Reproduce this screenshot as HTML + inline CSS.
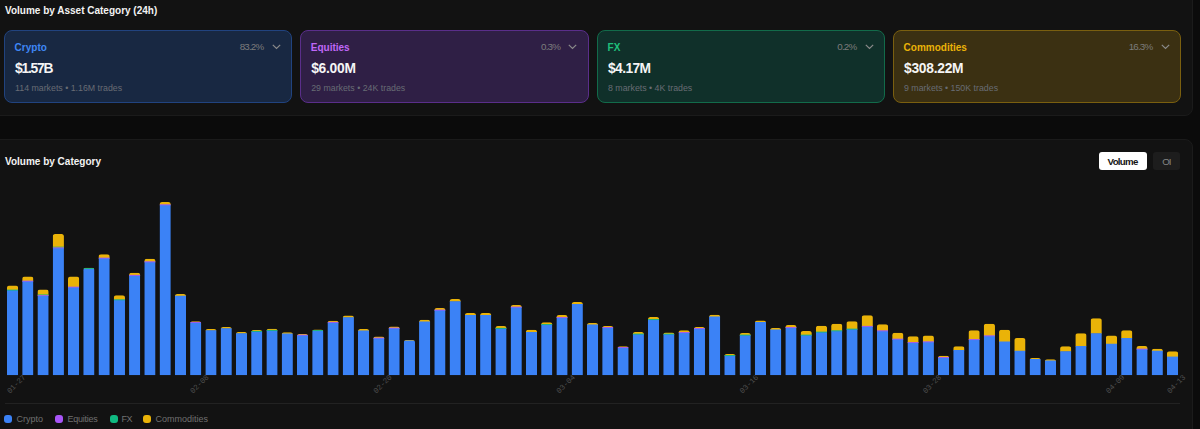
<!DOCTYPE html>
<html><head><meta charset="utf-8">
<style>
*{box-sizing:border-box;margin:0;padding:0}
html,body{width:1200px;height:429px;overflow:hidden;background:#0b0b0b;font-family:"Liberation Sans",sans-serif;position:relative}
.panel{position:absolute;background:#121212;border:1px solid #1b1b1b;border-radius:8px}
.t{position:absolute;white-space:nowrap;line-height:1}
.card{position:absolute;top:30px;height:73px;width:288px;border-radius:8px;border:1px solid}
.card .lab{position:absolute;left:9.6px;top:11.3px;font-size:10px;font-weight:bold;line-height:12px}
.card .val{position:absolute;left:10px;top:30.7px;font-size:13.8px;font-weight:bold;color:#f5f5f5;line-height:14px}
.card .sub{position:absolute;left:10px;top:52px;font-size:8.8px;color:#686c74;line-height:10px}
.card .pct{position:absolute;right:27.6px;top:11.1px;letter-spacing:-0.8px;font-size:9.8px;color:#7c7c7c;line-height:10px}
.card svg{position:absolute;right:10.4px;top:13.3px}
#c1{left:4px;background:#182842;border-color:#21437f}
#c1 .lab{color:#3f87f5}
#c2{left:300.2px;width:288.6px;background:#2f1f45;border-color:#5a2e8a}
#c2 .lab{color:#c067f7}
#c3{left:597px;background:#10302a;border-color:#126b4a}
#c3 .lab{color:#1fc07c}
#c4{left:893px;background:#3b3012;border-color:#7a5f0f}
#c4 .lab{color:#eab308}
</style></head><body>
<div class="panel" style="left:-10px;top:-10px;width:1203px;height:126px"></div>
<div class="panel" style="left:-10px;top:139px;width:1203px;height:300px"></div>
<div class="t" style="left:5px;top:6px;font-size:10px;font-weight:bold;color:#f2f2f2">Volume by Asset Category (24h)</div>

<div class="card" id="c1"><div class="lab">Crypto</div><div class="pct">83.2%</div><svg width="9" height="6" viewBox="0 0 9 6"><path d="M0.8 0.8 L4.5 4.5 L8.2 0.8" fill="none" stroke="#8a8a8a" stroke-width="1.2"/></svg><div class="val" style="letter-spacing:-1.2px">$1.57B</div><div class="sub">114 markets • 1.16M trades</div></div>
<div class="card" id="c2"><div class="lab">Equities</div><div class="pct">0.3%</div><svg width="9" height="6" viewBox="0 0 9 6"><path d="M0.8 0.8 L4.5 4.5 L8.2 0.8" fill="none" stroke="#8a8a8a" stroke-width="1.2"/></svg><div class="val" style="letter-spacing:-0.25px">$6.00M</div><div class="sub">29 markets • 24K trades</div></div>
<div class="card" id="c3"><div class="lab">FX</div><div class="pct">0.2%</div><svg width="9" height="6" viewBox="0 0 9 6"><path d="M0.8 0.8 L4.5 4.5 L8.2 0.8" fill="none" stroke="#8a8a8a" stroke-width="1.2"/></svg><div class="val" style="letter-spacing:-0.6px">$4.17M</div><div class="sub">8 markets • 4K trades</div></div>
<div class="card" id="c4"><div class="lab">Commodities</div><div class="pct">16.3%</div><svg width="9" height="6" viewBox="0 0 9 6"><path d="M0.8 0.8 L4.5 4.5 L8.2 0.8" fill="none" stroke="#8a8a8a" stroke-width="1.2"/></svg><div class="val" style="letter-spacing:-0.25px">$308.22M</div><div class="sub">9 markets • 150K trades</div></div>

<div class="t" style="left:5px;top:157px;font-size:10px;font-weight:bold;color:#f2f2f2">Volume by Category</div>
<div style="position:absolute;left:1099px;top:152px;width:48px;height:18px;background:#fff;border-radius:3px"></div>
<div class="t" style="left:1107.6px;top:156.6px;font-size:9.7px;letter-spacing:-0.7px;font-weight:bold;color:#151515">Volume</div>
<div style="position:absolute;left:1153px;top:152px;width:27px;height:18px;background:#1d1d1d;border-radius:3px"></div>
<div class="t" style="left:1162.2px;top:156.6px;font-size:9.7px;letter-spacing:-0.9px;color:#858585">OI</div>

<!--CHART--><svg style="position:absolute;left:0;top:0" width="1200" height="429" viewBox="0 0 1200 429">
<defs>
<clipPath id="k0"><path d="M6.95 375.2 V288.00 Q6.95 285.50 9.45 285.50 H15.65 Q18.15 285.50 18.15 288.00 V375.2 Z"/></clipPath>
<clipPath id="k1"><path d="M22.21 375.2 V279.00 Q22.21 276.50 24.71 276.50 H30.91 Q33.41 276.50 33.41 279.00 V375.2 Z"/></clipPath>
<clipPath id="k2"><path d="M37.48 375.2 V292.00 Q37.48 289.50 39.98 289.50 H46.18 Q48.68 289.50 48.68 292.00 V375.2 Z"/></clipPath>
<clipPath id="k3"><path d="M52.74 375.2 V236.50 Q52.74 234.00 55.24 234.00 H61.44 Q63.94 234.00 63.94 236.50 V375.2 Z"/></clipPath>
<clipPath id="k4"><path d="M68.00 375.2 V279.00 Q68.00 276.50 70.50 276.50 H76.70 Q79.20 276.50 79.20 279.00 V375.2 Z"/></clipPath>
<clipPath id="k5"><path d="M83.27 375.2 V270.25 Q83.27 267.75 85.77 267.75 H91.97 Q94.47 267.75 94.47 270.25 V375.2 Z"/></clipPath>
<clipPath id="k6"><path d="M98.53 375.2 V256.75 Q98.53 254.25 101.03 254.25 H107.23 Q109.73 254.25 109.73 256.75 V375.2 Z"/></clipPath>
<clipPath id="k7"><path d="M113.79 375.2 V297.75 Q113.79 295.25 116.29 295.25 H122.49 Q124.99 295.25 124.99 297.75 V375.2 Z"/></clipPath>
<clipPath id="k8"><path d="M129.05 375.2 V275.25 Q129.05 272.75 131.55 272.75 H137.75 Q140.25 272.75 140.25 275.25 V375.2 Z"/></clipPath>
<clipPath id="k9"><path d="M144.32 375.2 V261.25 Q144.32 258.75 146.82 258.75 H153.02 Q155.52 258.75 155.52 261.25 V375.2 Z"/></clipPath>
<clipPath id="k10"><path d="M159.58 375.2 V204.50 Q159.58 202.00 162.08 202.00 H168.28 Q170.78 202.00 170.78 204.50 V375.2 Z"/></clipPath>
<clipPath id="k11"><path d="M174.84 375.2 V296.50 Q174.84 294.00 177.34 294.00 H183.54 Q186.04 294.00 186.04 296.50 V375.2 Z"/></clipPath>
<clipPath id="k12"><path d="M190.11 375.2 V323.75 Q190.11 321.25 192.61 321.25 H198.81 Q201.31 321.25 201.31 323.75 V375.2 Z"/></clipPath>
<clipPath id="k13"><path d="M205.37 375.2 V331.50 Q205.37 329.00 207.87 329.00 H214.07 Q216.57 329.00 216.57 331.50 V375.2 Z"/></clipPath>
<clipPath id="k14"><path d="M220.63 375.2 V329.50 Q220.63 327.00 223.13 327.00 H229.33 Q231.83 327.00 231.83 329.50 V375.2 Z"/></clipPath>
<clipPath id="k15"><path d="M235.89 375.2 V334.50 Q235.89 332.00 238.39 332.00 H244.59 Q247.09 332.00 247.09 334.50 V375.2 Z"/></clipPath>
<clipPath id="k16"><path d="M251.16 375.2 V332.50 Q251.16 330.00 253.66 330.00 H259.86 Q262.36 330.00 262.36 332.50 V375.2 Z"/></clipPath>
<clipPath id="k17"><path d="M266.42 375.2 V331.25 Q266.42 328.75 268.92 328.75 H275.12 Q277.62 328.75 277.62 331.25 V375.2 Z"/></clipPath>
<clipPath id="k18"><path d="M281.68 375.2 V334.75 Q281.68 332.25 284.18 332.25 H290.38 Q292.88 332.25 292.88 334.75 V375.2 Z"/></clipPath>
<clipPath id="k19"><path d="M296.95 375.2 V336.50 Q296.95 334.00 299.45 334.00 H305.65 Q308.15 334.00 308.15 336.50 V375.2 Z"/></clipPath>
<clipPath id="k20"><path d="M312.21 375.2 V332.00 Q312.21 329.50 314.71 329.50 H320.91 Q323.41 329.50 323.41 332.00 V375.2 Z"/></clipPath>
<clipPath id="k21"><path d="M327.47 375.2 V323.25 Q327.47 320.75 329.97 320.75 H336.17 Q338.67 320.75 338.67 323.25 V375.2 Z"/></clipPath>
<clipPath id="k22"><path d="M342.74 375.2 V318.00 Q342.74 315.50 345.24 315.50 H351.44 Q353.94 315.50 353.94 318.00 V375.2 Z"/></clipPath>
<clipPath id="k23"><path d="M358.00 375.2 V331.50 Q358.00 329.00 360.50 329.00 H366.70 Q369.20 329.00 369.20 331.50 V375.2 Z"/></clipPath>
<clipPath id="k24"><path d="M373.26 375.2 V339.00 Q373.26 336.50 375.76 336.50 H381.96 Q384.46 336.50 384.46 339.00 V375.2 Z"/></clipPath>
<clipPath id="k25"><path d="M388.52 375.2 V329.00 Q388.52 326.50 391.02 326.50 H397.22 Q399.72 326.50 399.72 329.00 V375.2 Z"/></clipPath>
<clipPath id="k26"><path d="M403.79 375.2 V342.50 Q403.79 340.00 406.29 340.00 H412.49 Q414.99 340.00 414.99 342.50 V375.2 Z"/></clipPath>
<clipPath id="k27"><path d="M419.05 375.2 V322.25 Q419.05 319.75 421.55 319.75 H427.75 Q430.25 319.75 430.25 322.25 V375.2 Z"/></clipPath>
<clipPath id="k28"><path d="M434.31 375.2 V310.50 Q434.31 308.00 436.81 308.00 H443.01 Q445.51 308.00 445.51 310.50 V375.2 Z"/></clipPath>
<clipPath id="k29"><path d="M449.58 375.2 V301.50 Q449.58 299.00 452.08 299.00 H458.28 Q460.78 299.00 460.78 301.50 V375.2 Z"/></clipPath>
<clipPath id="k30"><path d="M464.84 375.2 V315.50 Q464.84 313.00 467.34 313.00 H473.54 Q476.04 313.00 476.04 315.50 V375.2 Z"/></clipPath>
<clipPath id="k31"><path d="M480.10 375.2 V315.50 Q480.10 313.00 482.60 313.00 H488.80 Q491.30 313.00 491.30 315.50 V375.2 Z"/></clipPath>
<clipPath id="k32"><path d="M495.37 375.2 V328.50 Q495.37 326.00 497.87 326.00 H504.07 Q506.57 326.00 506.57 328.50 V375.2 Z"/></clipPath>
<clipPath id="k33"><path d="M510.63 375.2 V307.50 Q510.63 305.00 513.13 305.00 H519.33 Q521.83 305.00 521.83 307.50 V375.2 Z"/></clipPath>
<clipPath id="k34"><path d="M525.89 375.2 V332.25 Q525.89 329.75 528.39 329.75 H534.59 Q537.09 329.75 537.09 332.25 V375.2 Z"/></clipPath>
<clipPath id="k35"><path d="M541.16 375.2 V324.75 Q541.16 322.25 543.66 322.25 H549.86 Q552.36 322.25 552.36 324.75 V375.2 Z"/></clipPath>
<clipPath id="k36"><path d="M556.42 375.2 V317.50 Q556.42 315.00 558.92 315.00 H565.12 Q567.62 315.00 567.62 317.50 V375.2 Z"/></clipPath>
<clipPath id="k37"><path d="M571.68 375.2 V304.50 Q571.68 302.00 574.18 302.00 H580.38 Q582.88 302.00 582.88 304.50 V375.2 Z"/></clipPath>
<clipPath id="k38"><path d="M586.94 375.2 V325.50 Q586.94 323.00 589.44 323.00 H595.64 Q598.14 323.00 598.14 325.50 V375.2 Z"/></clipPath>
<clipPath id="k39"><path d="M602.21 375.2 V328.50 Q602.21 326.00 604.71 326.00 H610.91 Q613.41 326.00 613.41 328.50 V375.2 Z"/></clipPath>
<clipPath id="k40"><path d="M617.47 375.2 V348.75 Q617.47 346.25 619.97 346.25 H626.17 Q628.67 346.25 628.67 348.75 V375.2 Z"/></clipPath>
<clipPath id="k41"><path d="M632.73 375.2 V334.50 Q632.73 332.00 635.23 332.00 H641.43 Q643.93 332.00 643.93 334.50 V375.2 Z"/></clipPath>
<clipPath id="k42"><path d="M648.00 375.2 V319.50 Q648.00 317.00 650.50 317.00 H656.70 Q659.20 317.00 659.20 319.50 V375.2 Z"/></clipPath>
<clipPath id="k43"><path d="M663.26 375.2 V335.00 Q663.26 332.50 665.76 332.50 H671.96 Q674.46 332.50 674.46 335.00 V375.2 Z"/></clipPath>
<clipPath id="k44"><path d="M678.52 375.2 V332.75 Q678.52 330.25 681.02 330.25 H687.22 Q689.72 330.25 689.72 332.75 V375.2 Z"/></clipPath>
<clipPath id="k45"><path d="M693.79 375.2 V329.50 Q693.79 327.00 696.29 327.00 H702.49 Q704.99 327.00 704.99 329.50 V375.2 Z"/></clipPath>
<clipPath id="k46"><path d="M709.05 375.2 V317.25 Q709.05 314.75 711.55 314.75 H717.75 Q720.25 314.75 720.25 317.25 V375.2 Z"/></clipPath>
<clipPath id="k47"><path d="M724.31 375.2 V356.50 Q724.31 354.00 726.81 354.00 H733.01 Q735.51 354.00 735.51 356.50 V375.2 Z"/></clipPath>
<clipPath id="k48"><path d="M739.57 375.2 V335.50 Q739.57 333.00 742.07 333.00 H748.27 Q750.77 333.00 750.77 335.50 V375.2 Z"/></clipPath>
<clipPath id="k49"><path d="M754.84 375.2 V323.00 Q754.84 320.50 757.34 320.50 H763.54 Q766.04 320.50 766.04 323.00 V375.2 Z"/></clipPath>
<clipPath id="k50"><path d="M770.10 375.2 V330.50 Q770.10 328.00 772.60 328.00 H778.80 Q781.30 328.00 781.30 330.50 V375.2 Z"/></clipPath>
<clipPath id="k51"><path d="M785.36 375.2 V327.50 Q785.36 325.00 787.86 325.00 H794.06 Q796.56 325.00 796.56 327.50 V375.2 Z"/></clipPath>
<clipPath id="k52"><path d="M800.63 375.2 V333.50 Q800.63 331.00 803.13 331.00 H809.33 Q811.83 331.00 811.83 333.50 V375.2 Z"/></clipPath>
<clipPath id="k53"><path d="M815.89 375.2 V328.25 Q815.89 325.75 818.39 325.75 H824.59 Q827.09 325.75 827.09 328.25 V375.2 Z"/></clipPath>
<clipPath id="k54"><path d="M831.15 375.2 V326.25 Q831.15 323.75 833.65 323.75 H839.85 Q842.35 323.75 842.35 326.25 V375.2 Z"/></clipPath>
<clipPath id="k55"><path d="M846.42 375.2 V323.75 Q846.42 321.25 848.92 321.25 H855.12 Q857.62 321.25 857.62 323.75 V375.2 Z"/></clipPath>
<clipPath id="k56"><path d="M861.68 375.2 V317.75 Q861.68 315.25 864.18 315.25 H870.38 Q872.88 315.25 872.88 317.75 V375.2 Z"/></clipPath>
<clipPath id="k57"><path d="M876.94 375.2 V326.75 Q876.94 324.25 879.44 324.25 H885.64 Q888.14 324.25 888.14 326.75 V375.2 Z"/></clipPath>
<clipPath id="k58"><path d="M892.20 375.2 V335.25 Q892.20 332.75 894.70 332.75 H900.90 Q903.40 332.75 903.40 335.25 V375.2 Z"/></clipPath>
<clipPath id="k59"><path d="M907.47 375.2 V338.75 Q907.47 336.25 909.97 336.25 H916.17 Q918.67 336.25 918.67 338.75 V375.2 Z"/></clipPath>
<clipPath id="k60"><path d="M922.73 375.2 V338.00 Q922.73 335.50 925.23 335.50 H931.43 Q933.93 335.50 933.93 338.00 V375.2 Z"/></clipPath>
<clipPath id="k61"><path d="M937.99 375.2 V358.25 Q937.99 355.75 940.49 355.75 H946.69 Q949.19 355.75 949.19 358.25 V375.2 Z"/></clipPath>
<clipPath id="k62"><path d="M953.26 375.2 V348.75 Q953.26 346.25 955.76 346.25 H961.96 Q964.46 346.25 964.46 348.75 V375.2 Z"/></clipPath>
<clipPath id="k63"><path d="M968.52 375.2 V332.75 Q968.52 330.25 971.02 330.25 H977.22 Q979.72 330.25 979.72 332.75 V375.2 Z"/></clipPath>
<clipPath id="k64"><path d="M983.78 375.2 V326.25 Q983.78 323.75 986.28 323.75 H992.48 Q994.98 323.75 994.98 326.25 V375.2 Z"/></clipPath>
<clipPath id="k65"><path d="M999.05 375.2 V332.25 Q999.05 329.75 1001.55 329.75 H1007.75 Q1010.25 329.75 1010.25 332.25 V375.2 Z"/></clipPath>
<clipPath id="k66"><path d="M1014.31 375.2 V340.50 Q1014.31 338.00 1016.81 338.00 H1023.01 Q1025.51 338.00 1025.51 340.50 V375.2 Z"/></clipPath>
<clipPath id="k67"><path d="M1029.57 375.2 V360.50 Q1029.57 358.00 1032.07 358.00 H1038.27 Q1040.77 358.00 1040.77 360.50 V375.2 Z"/></clipPath>
<clipPath id="k68"><path d="M1044.83 375.2 V361.75 Q1044.83 359.25 1047.33 359.25 H1053.53 Q1056.03 359.25 1056.03 361.75 V375.2 Z"/></clipPath>
<clipPath id="k69"><path d="M1060.10 375.2 V348.75 Q1060.10 346.25 1062.60 346.25 H1068.80 Q1071.30 346.25 1071.30 348.75 V375.2 Z"/></clipPath>
<clipPath id="k70"><path d="M1075.36 375.2 V335.75 Q1075.36 333.25 1077.86 333.25 H1084.06 Q1086.56 333.25 1086.56 335.75 V375.2 Z"/></clipPath>
<clipPath id="k71"><path d="M1090.62 375.2 V320.75 Q1090.62 318.25 1093.12 318.25 H1099.32 Q1101.82 318.25 1101.82 320.75 V375.2 Z"/></clipPath>
<clipPath id="k72"><path d="M1105.89 375.2 V338.00 Q1105.89 335.50 1108.39 335.50 H1114.59 Q1117.09 335.50 1117.09 338.00 V375.2 Z"/></clipPath>
<clipPath id="k73"><path d="M1121.15 375.2 V332.75 Q1121.15 330.25 1123.65 330.25 H1129.85 Q1132.35 330.25 1132.35 332.75 V375.2 Z"/></clipPath>
<clipPath id="k74"><path d="M1136.41 375.2 V348.50 Q1136.41 346.00 1138.91 346.00 H1145.11 Q1147.61 346.00 1147.61 348.50 V375.2 Z"/></clipPath>
<clipPath id="k75"><path d="M1151.67 375.2 V351.25 Q1151.67 348.75 1154.17 348.75 H1160.38 Q1162.88 348.75 1162.88 351.25 V375.2 Z"/></clipPath>
<clipPath id="k76"><path d="M1166.94 375.2 V353.80 Q1166.94 351.30 1169.44 351.30 H1175.64 Q1178.14 351.30 1178.14 353.80 V375.2 Z"/></clipPath>
</defs>
<g clip-path="url(#k0)"><rect x="6.95" y="285.50" width="11.2" height="5.00" fill="#eab308"/><rect x="6.95" y="290.00" width="11.2" height="85.20" fill="#3b82f6"/></g>
<g clip-path="url(#k1)"><rect x="22.21" y="276.50" width="11.2" height="5.00" fill="#eab308"/><rect x="22.21" y="281.00" width="11.2" height="94.20" fill="#3b82f6"/></g>
<g clip-path="url(#k2)"><rect x="37.48" y="289.50" width="11.2" height="6.50" fill="#eab308"/><rect x="37.48" y="295.50" width="11.2" height="79.70" fill="#3b82f6"/></g>
<g clip-path="url(#k3)"><rect x="52.74" y="234.00" width="11.2" height="14.25" fill="#eab308"/><rect x="52.74" y="247.75" width="11.2" height="127.45" fill="#3b82f6"/></g>
<g clip-path="url(#k4)"><rect x="68.00" y="276.50" width="11.2" height="11.00" fill="#eab308"/><rect x="68.00" y="287.00" width="11.2" height="88.20" fill="#3b82f6"/></g>
<g clip-path="url(#k5)"><rect x="83.27" y="267.75" width="11.2" height="1.25" fill="#eab308"/><rect x="83.27" y="268.50" width="11.2" height="106.70" fill="#3b82f6"/></g>
<g clip-path="url(#k6)"><rect x="98.53" y="254.25" width="11.2" height="4.25" fill="#eab308"/><rect x="98.53" y="258.00" width="11.2" height="117.20" fill="#3b82f6"/></g>
<g clip-path="url(#k7)"><rect x="113.79" y="295.25" width="11.2" height="5.00" fill="#eab308"/><rect x="113.79" y="299.75" width="11.2" height="75.45" fill="#3b82f6"/></g>
<g clip-path="url(#k8)"><rect x="129.05" y="272.75" width="11.2" height="3.00" fill="#eab308"/><rect x="129.05" y="275.25" width="11.2" height="99.95" fill="#3b82f6"/></g>
<g clip-path="url(#k9)"><rect x="144.32" y="258.75" width="11.2" height="3.50" fill="#eab308"/><rect x="144.32" y="261.75" width="11.2" height="113.45" fill="#3b82f6"/></g>
<g clip-path="url(#k10)"><rect x="159.58" y="202.00" width="11.2" height="3.25" fill="#eab308"/><rect x="159.58" y="204.75" width="11.2" height="170.45" fill="#3b82f6"/></g>
<g clip-path="url(#k11)"><rect x="174.84" y="294.00" width="11.2" height="2.25" fill="#eab308"/><rect x="174.84" y="295.75" width="11.2" height="79.45" fill="#3b82f6"/></g>
<g clip-path="url(#k12)"><rect x="190.11" y="321.25" width="11.2" height="1.50" fill="#eab308"/><rect x="190.11" y="322.25" width="11.2" height="52.95" fill="#3b82f6"/></g>
<g clip-path="url(#k13)"><rect x="205.37" y="329.00" width="11.2" height="1.75" fill="#eab308"/><rect x="205.37" y="330.25" width="11.2" height="44.95" fill="#3b82f6"/></g>
<g clip-path="url(#k14)"><rect x="220.63" y="327.00" width="11.2" height="1.75" fill="#eab308"/><rect x="220.63" y="328.25" width="11.2" height="46.95" fill="#3b82f6"/></g>
<g clip-path="url(#k15)"><rect x="235.89" y="332.00" width="11.2" height="1.75" fill="#eab308"/><rect x="235.89" y="333.25" width="11.2" height="41.95" fill="#3b82f6"/></g>
<g clip-path="url(#k16)"><rect x="251.16" y="330.00" width="11.2" height="1.75" fill="#eab308"/><rect x="251.16" y="331.25" width="11.2" height="43.95" fill="#3b82f6"/></g>
<g clip-path="url(#k17)"><rect x="266.42" y="328.75" width="11.2" height="2.00" fill="#eab308"/><rect x="266.42" y="330.25" width="11.2" height="44.95" fill="#3b82f6"/></g>
<g clip-path="url(#k18)"><rect x="281.68" y="332.25" width="11.2" height="1.75" fill="#eab308"/><rect x="281.68" y="333.50" width="11.2" height="41.70" fill="#3b82f6"/></g>
<g clip-path="url(#k19)"><rect x="296.95" y="334.00" width="11.2" height="1.50" fill="#eab308"/><rect x="296.95" y="335.00" width="11.2" height="40.20" fill="#3b82f6"/></g>
<g clip-path="url(#k20)"><rect x="312.21" y="329.50" width="11.2" height="1.50" fill="#eab308"/><rect x="312.21" y="330.50" width="11.2" height="44.70" fill="#3b82f6"/></g>
<g clip-path="url(#k21)"><rect x="327.47" y="320.75" width="11.2" height="2.00" fill="#eab308"/><rect x="327.47" y="322.25" width="11.2" height="52.95" fill="#3b82f6"/></g>
<g clip-path="url(#k22)"><rect x="342.74" y="315.50" width="11.2" height="2.25" fill="#eab308"/><rect x="342.74" y="317.25" width="11.2" height="57.95" fill="#3b82f6"/></g>
<g clip-path="url(#k23)"><rect x="358.00" y="329.00" width="11.2" height="2.00" fill="#eab308"/><rect x="358.00" y="330.50" width="11.2" height="44.70" fill="#3b82f6"/></g>
<g clip-path="url(#k24)"><rect x="373.26" y="336.50" width="11.2" height="2.00" fill="#eab308"/><rect x="373.26" y="338.00" width="11.2" height="37.20" fill="#3b82f6"/></g>
<g clip-path="url(#k25)"><rect x="388.52" y="326.50" width="11.2" height="2.00" fill="#eab308"/><rect x="388.52" y="328.00" width="11.2" height="47.20" fill="#3b82f6"/></g>
<g clip-path="url(#k26)"><rect x="403.79" y="340.00" width="11.2" height="1.00" fill="#eab308"/><rect x="403.79" y="340.50" width="11.2" height="34.70" fill="#3b82f6"/></g>
<g clip-path="url(#k27)"><rect x="419.05" y="319.75" width="11.2" height="2.25" fill="#eab308"/><rect x="419.05" y="321.50" width="11.2" height="53.70" fill="#3b82f6"/></g>
<g clip-path="url(#k28)"><rect x="434.31" y="308.00" width="11.2" height="2.50" fill="#eab308"/><rect x="434.31" y="310.00" width="11.2" height="65.20" fill="#3b82f6"/></g>
<g clip-path="url(#k29)"><rect x="449.58" y="299.00" width="11.2" height="2.75" fill="#eab308"/><rect x="449.58" y="301.25" width="11.2" height="73.95" fill="#3b82f6"/></g>
<g clip-path="url(#k30)"><rect x="464.84" y="313.00" width="11.2" height="2.50" fill="#eab308"/><rect x="464.84" y="315.00" width="11.2" height="60.20" fill="#3b82f6"/></g>
<g clip-path="url(#k31)"><rect x="480.10" y="313.00" width="11.2" height="2.50" fill="#eab308"/><rect x="480.10" y="315.00" width="11.2" height="60.20" fill="#3b82f6"/></g>
<g clip-path="url(#k32)"><rect x="495.37" y="326.00" width="11.2" height="2.75" fill="#eab308"/><rect x="495.37" y="328.25" width="11.2" height="46.95" fill="#3b82f6"/></g>
<g clip-path="url(#k33)"><rect x="510.63" y="305.00" width="11.2" height="2.50" fill="#eab308"/><rect x="510.63" y="307.00" width="11.2" height="68.20" fill="#3b82f6"/></g>
<g clip-path="url(#k34)"><rect x="525.89" y="329.75" width="11.2" height="2.75" fill="#eab308"/><rect x="525.89" y="332.00" width="11.2" height="43.20" fill="#3b82f6"/></g>
<g clip-path="url(#k35)"><rect x="541.16" y="322.25" width="11.2" height="2.75" fill="#eab308"/><rect x="541.16" y="324.50" width="11.2" height="50.70" fill="#3b82f6"/></g>
<g clip-path="url(#k36)"><rect x="556.42" y="315.00" width="11.2" height="3.00" fill="#eab308"/><rect x="556.42" y="317.50" width="11.2" height="57.70" fill="#3b82f6"/></g>
<g clip-path="url(#k37)"><rect x="571.68" y="302.00" width="11.2" height="2.50" fill="#eab308"/><rect x="571.68" y="304.00" width="11.2" height="71.20" fill="#3b82f6"/></g>
<g clip-path="url(#k38)"><rect x="586.94" y="323.00" width="11.2" height="2.00" fill="#eab308"/><rect x="586.94" y="324.50" width="11.2" height="50.70" fill="#3b82f6"/></g>
<g clip-path="url(#k39)"><rect x="602.21" y="326.00" width="11.2" height="2.00" fill="#eab308"/><rect x="602.21" y="327.50" width="11.2" height="47.70" fill="#3b82f6"/></g>
<g clip-path="url(#k40)"><rect x="617.47" y="346.25" width="11.2" height="1.75" fill="#eab308"/><rect x="617.47" y="347.50" width="11.2" height="27.70" fill="#3b82f6"/></g>
<g clip-path="url(#k41)"><rect x="632.73" y="332.00" width="11.2" height="2.50" fill="#eab308"/><rect x="632.73" y="334.00" width="11.2" height="41.20" fill="#3b82f6"/></g>
<g clip-path="url(#k42)"><rect x="648.00" y="317.00" width="11.2" height="3.00" fill="#eab308"/><rect x="648.00" y="319.50" width="11.2" height="55.70" fill="#3b82f6"/></g>
<g clip-path="url(#k43)"><rect x="663.26" y="332.50" width="11.2" height="2.00" fill="#eab308"/><rect x="663.26" y="334.00" width="11.2" height="41.20" fill="#3b82f6"/></g>
<g clip-path="url(#k44)"><rect x="678.52" y="330.25" width="11.2" height="2.75" fill="#eab308"/><rect x="678.52" y="332.50" width="11.2" height="42.70" fill="#3b82f6"/></g>
<g clip-path="url(#k45)"><rect x="693.79" y="327.00" width="11.2" height="2.00" fill="#eab308"/><rect x="693.79" y="328.50" width="11.2" height="46.70" fill="#3b82f6"/></g>
<g clip-path="url(#k46)"><rect x="709.05" y="314.75" width="11.2" height="2.25" fill="#eab308"/><rect x="709.05" y="316.50" width="11.2" height="58.70" fill="#3b82f6"/></g>
<g clip-path="url(#k47)"><rect x="724.31" y="354.00" width="11.2" height="2.00" fill="#eab308"/><rect x="724.31" y="355.50" width="11.2" height="19.70" fill="#3b82f6"/></g>
<g clip-path="url(#k48)"><rect x="739.57" y="333.00" width="11.2" height="2.50" fill="#eab308"/><rect x="739.57" y="335.00" width="11.2" height="40.20" fill="#3b82f6"/></g>
<g clip-path="url(#k49)"><rect x="754.84" y="320.50" width="11.2" height="2.00" fill="#eab308"/><rect x="754.84" y="322.00" width="11.2" height="53.20" fill="#3b82f6"/></g>
<g clip-path="url(#k50)"><rect x="770.10" y="328.00" width="11.2" height="2.00" fill="#eab308"/><rect x="770.10" y="329.50" width="11.2" height="45.70" fill="#3b82f6"/></g>
<g clip-path="url(#k51)"><rect x="785.36" y="325.00" width="11.2" height="3.00" fill="#eab308"/><rect x="785.36" y="327.50" width="11.2" height="47.70" fill="#3b82f6"/></g>
<g clip-path="url(#k52)"><rect x="800.63" y="331.00" width="11.2" height="4.50" fill="#eab308"/><rect x="800.63" y="335.00" width="11.2" height="40.20" fill="#3b82f6"/></g>
<g clip-path="url(#k53)"><rect x="815.89" y="325.75" width="11.2" height="6.75" fill="#eab308"/><rect x="815.89" y="332.00" width="11.2" height="43.20" fill="#3b82f6"/></g>
<g clip-path="url(#k54)"><rect x="831.15" y="323.75" width="11.2" height="7.50" fill="#eab308"/><rect x="831.15" y="330.75" width="11.2" height="44.45" fill="#3b82f6"/></g>
<g clip-path="url(#k55)"><rect x="846.42" y="321.25" width="11.2" height="8.25" fill="#eab308"/><rect x="846.42" y="329.00" width="11.2" height="46.20" fill="#3b82f6"/></g>
<g clip-path="url(#k56)"><rect x="861.68" y="315.25" width="11.2" height="11.50" fill="#eab308"/><rect x="861.68" y="326.25" width="11.2" height="48.95" fill="#3b82f6"/></g>
<g clip-path="url(#k57)"><rect x="876.94" y="324.25" width="11.2" height="7.00" fill="#eab308"/><rect x="876.94" y="330.75" width="11.2" height="44.45" fill="#3b82f6"/></g>
<g clip-path="url(#k58)"><rect x="892.20" y="332.75" width="11.2" height="6.75" fill="#eab308"/><rect x="892.20" y="339.00" width="11.2" height="36.20" fill="#3b82f6"/></g>
<g clip-path="url(#k59)"><rect x="907.47" y="336.25" width="11.2" height="6.75" fill="#eab308"/><rect x="907.47" y="342.50" width="11.2" height="32.70" fill="#3b82f6"/></g>
<g clip-path="url(#k60)"><rect x="922.73" y="335.50" width="11.2" height="6.75" fill="#eab308"/><rect x="922.73" y="341.75" width="11.2" height="33.45" fill="#3b82f6"/></g>
<g clip-path="url(#k61)"><rect x="937.99" y="355.75" width="11.2" height="2.25" fill="#eab308"/><rect x="937.99" y="357.50" width="11.2" height="17.70" fill="#3b82f6"/></g>
<g clip-path="url(#k62)"><rect x="953.26" y="346.25" width="11.2" height="4.25" fill="#eab308"/><rect x="953.26" y="350.00" width="11.2" height="25.20" fill="#3b82f6"/></g>
<g clip-path="url(#k63)"><rect x="968.52" y="330.25" width="11.2" height="9.75" fill="#eab308"/><rect x="968.52" y="339.50" width="11.2" height="35.70" fill="#3b82f6"/></g>
<g clip-path="url(#k64)"><rect x="983.78" y="323.75" width="11.2" height="12.50" fill="#eab308"/><rect x="983.78" y="335.75" width="11.2" height="39.45" fill="#3b82f6"/></g>
<g clip-path="url(#k65)"><rect x="999.05" y="329.75" width="11.2" height="12.25" fill="#eab308"/><rect x="999.05" y="341.50" width="11.2" height="33.70" fill="#3b82f6"/></g>
<g clip-path="url(#k66)"><rect x="1014.31" y="338.00" width="11.2" height="13.25" fill="#eab308"/><rect x="1014.31" y="350.75" width="11.2" height="24.45" fill="#3b82f6"/></g>
<g clip-path="url(#k67)"><rect x="1029.57" y="358.00" width="11.2" height="1.50" fill="#eab308"/><rect x="1029.57" y="359.00" width="11.2" height="16.20" fill="#3b82f6"/></g>
<g clip-path="url(#k68)"><rect x="1044.83" y="359.25" width="11.2" height="1.75" fill="#eab308"/><rect x="1044.83" y="360.50" width="11.2" height="14.70" fill="#3b82f6"/></g>
<g clip-path="url(#k69)"><rect x="1060.10" y="346.25" width="11.2" height="5.50" fill="#eab308"/><rect x="1060.10" y="351.25" width="11.2" height="23.95" fill="#3b82f6"/></g>
<g clip-path="url(#k70)"><rect x="1075.36" y="333.25" width="11.2" height="13.25" fill="#eab308"/><rect x="1075.36" y="346.00" width="11.2" height="29.20" fill="#3b82f6"/></g>
<g clip-path="url(#k71)"><rect x="1090.62" y="318.25" width="11.2" height="15.50" fill="#eab308"/><rect x="1090.62" y="333.25" width="11.2" height="41.95" fill="#3b82f6"/></g>
<g clip-path="url(#k72)"><rect x="1105.89" y="335.50" width="11.2" height="8.75" fill="#eab308"/><rect x="1105.89" y="343.75" width="11.2" height="31.45" fill="#3b82f6"/></g>
<g clip-path="url(#k73)"><rect x="1121.15" y="330.25" width="11.2" height="8.25" fill="#eab308"/><rect x="1121.15" y="338.00" width="11.2" height="37.20" fill="#3b82f6"/></g>
<g clip-path="url(#k74)"><rect x="1136.41" y="346.00" width="11.2" height="3.50" fill="#eab308"/><rect x="1136.41" y="349.00" width="11.2" height="26.20" fill="#3b82f6"/></g>
<g clip-path="url(#k75)"><rect x="1151.67" y="348.75" width="11.2" height="2.50" fill="#eab308"/><rect x="1151.67" y="350.75" width="11.2" height="24.45" fill="#3b82f6"/></g>
<g clip-path="url(#k76)"><rect x="1166.94" y="351.30" width="11.2" height="5.80" fill="#eab308"/><rect x="1166.94" y="356.60" width="11.2" height="18.60" fill="#3b82f6"/></g>
<rect clip-path="url(#k0)" x="6.95" y="289.65" width="11.2" height="0.9" fill="#10b981"/>
<rect clip-path="url(#k1)" x="22.21" y="280.65" width="11.2" height="0.9" fill="#a855f7"/>
<rect clip-path="url(#k2)" x="37.48" y="294.45" width="11.2" height="0.8" fill="#10b981"/><rect clip-path="url(#k2)" x="37.48" y="295.25" width="11.2" height="0.8" fill="#a855f7"/>
<rect clip-path="url(#k3)" x="52.74" y="246.70" width="11.2" height="0.8" fill="#10b981"/><rect clip-path="url(#k3)" x="52.74" y="247.50" width="11.2" height="0.8" fill="#a855f7"/>
<rect clip-path="url(#k4)" x="68.00" y="286.65" width="11.2" height="0.9" fill="#a855f7"/>
<rect clip-path="url(#k5)" x="83.27" y="268.15" width="11.2" height="0.9" fill="#10b981"/>
<rect clip-path="url(#k6)" x="98.53" y="257.65" width="11.2" height="0.9" fill="#a855f7"/>
<rect clip-path="url(#k7)" x="113.79" y="299.40" width="11.2" height="0.9" fill="#10b981"/>
<rect clip-path="url(#k8)" x="129.05" y="274.90" width="11.2" height="0.9" fill="#a855f7"/>
<rect clip-path="url(#k9)" x="144.32" y="261.40" width="11.2" height="0.9" fill="#a855f7"/>
<rect clip-path="url(#k10)" x="159.58" y="204.40" width="11.2" height="0.9" fill="#a855f7"/>
<rect clip-path="url(#k12)" x="190.11" y="321.90" width="11.2" height="0.9" fill="#a855f7"/>
<rect clip-path="url(#k16)" x="251.16" y="330.90" width="11.2" height="0.9" fill="#10b981"/>
<rect clip-path="url(#k17)" x="266.42" y="329.90" width="11.2" height="0.9" fill="#10b981"/>
<rect clip-path="url(#k19)" x="296.95" y="334.65" width="11.2" height="0.9" fill="#a855f7"/>
<rect clip-path="url(#k20)" x="312.21" y="330.15" width="11.2" height="0.9" fill="#10b981"/>
<rect clip-path="url(#k21)" x="327.47" y="321.90" width="11.2" height="0.9" fill="#a855f7"/>
<rect clip-path="url(#k24)" x="373.26" y="337.65" width="11.2" height="0.9" fill="#a855f7"/>
<rect clip-path="url(#k25)" x="388.52" y="327.65" width="11.2" height="0.9" fill="#a855f7"/>
<rect clip-path="url(#k28)" x="434.31" y="309.65" width="11.2" height="0.9" fill="#a855f7"/>
<rect clip-path="url(#k32)" x="495.37" y="327.90" width="11.2" height="0.9" fill="#10b981"/>
<rect clip-path="url(#k33)" x="510.63" y="306.65" width="11.2" height="0.9" fill="#a855f7"/>
<rect clip-path="url(#k35)" x="541.16" y="324.15" width="11.2" height="0.9" fill="#10b981"/>
<rect clip-path="url(#k36)" x="556.42" y="317.15" width="11.2" height="0.9" fill="#a855f7"/>
<rect clip-path="url(#k39)" x="602.21" y="327.15" width="11.2" height="0.9" fill="#a855f7"/>
<rect clip-path="url(#k40)" x="617.47" y="347.15" width="11.2" height="0.9" fill="#a855f7"/>
<rect clip-path="url(#k41)" x="632.73" y="333.65" width="11.2" height="0.9" fill="#10b981"/>
<rect clip-path="url(#k42)" x="648.00" y="319.15" width="11.2" height="0.9" fill="#10b981"/>
<rect clip-path="url(#k43)" x="663.26" y="333.65" width="11.2" height="0.9" fill="#10b981"/>
<rect clip-path="url(#k44)" x="678.52" y="332.15" width="11.2" height="0.9" fill="#a855f7"/>
<rect clip-path="url(#k45)" x="693.79" y="328.15" width="11.2" height="0.9" fill="#a855f7"/>
<rect clip-path="url(#k47)" x="724.31" y="355.15" width="11.2" height="0.9" fill="#10b981"/>
<rect clip-path="url(#k48)" x="739.57" y="334.65" width="11.2" height="0.9" fill="#10b981"/>
<rect clip-path="url(#k51)" x="785.36" y="327.15" width="11.2" height="0.9" fill="#a855f7"/>
<rect clip-path="url(#k52)" x="800.63" y="334.65" width="11.2" height="0.9" fill="#10b981"/>
<rect clip-path="url(#k53)" x="815.89" y="331.65" width="11.2" height="0.9" fill="#10b981"/>
<rect clip-path="url(#k54)" x="831.15" y="330.40" width="11.2" height="0.9" fill="#10b981"/>
<rect clip-path="url(#k55)" x="846.42" y="328.65" width="11.2" height="0.9" fill="#10b981"/>
<rect clip-path="url(#k56)" x="861.68" y="325.90" width="11.2" height="0.9" fill="#a855f7"/>
<rect clip-path="url(#k57)" x="876.94" y="330.40" width="11.2" height="0.9" fill="#a855f7"/>
<rect clip-path="url(#k58)" x="892.20" y="338.65" width="11.2" height="0.9" fill="#a855f7"/>
<rect clip-path="url(#k59)" x="907.47" y="342.15" width="11.2" height="0.9" fill="#a855f7"/>
<rect clip-path="url(#k60)" x="922.73" y="341.40" width="11.2" height="0.9" fill="#a855f7"/>
<rect clip-path="url(#k61)" x="937.99" y="357.15" width="11.2" height="0.9" fill="#a855f7"/>
<rect clip-path="url(#k63)" x="968.52" y="339.15" width="11.2" height="0.9" fill="#a855f7"/>
<rect clip-path="url(#k64)" x="983.78" y="335.40" width="11.2" height="0.9" fill="#a855f7"/>
<rect clip-path="url(#k74)" x="1136.41" y="348.65" width="11.2" height="0.9" fill="#a855f7"/>
<text x="16.55" y="384.3" transform="rotate(-45 16.55 384.3)" text-anchor="middle" dominant-baseline="central" font-family="Liberation Mono" font-size="7.6" fill="#4e4e4e">01-27</text>
<text x="199.71" y="384.3" transform="rotate(-45 199.71 384.3)" text-anchor="middle" dominant-baseline="central" font-family="Liberation Mono" font-size="7.6" fill="#4e4e4e">02-08</text>
<text x="382.86" y="384.3" transform="rotate(-45 382.86 384.3)" text-anchor="middle" dominant-baseline="central" font-family="Liberation Mono" font-size="7.6" fill="#4e4e4e">02-20</text>
<text x="566.02" y="384.3" transform="rotate(-45 566.02 384.3)" text-anchor="middle" dominant-baseline="central" font-family="Liberation Mono" font-size="7.6" fill="#4e4e4e">03-04</text>
<text x="749.17" y="384.3" transform="rotate(-45 749.17 384.3)" text-anchor="middle" dominant-baseline="central" font-family="Liberation Mono" font-size="7.6" fill="#4e4e4e">03-16</text>
<text x="932.33" y="384.3" transform="rotate(-45 932.33 384.3)" text-anchor="middle" dominant-baseline="central" font-family="Liberation Mono" font-size="7.6" fill="#4e4e4e">03-28</text>
<text x="1115.49" y="384.3" transform="rotate(-45 1115.49 384.3)" text-anchor="middle" dominant-baseline="central" font-family="Liberation Mono" font-size="7.6" fill="#4e4e4e">04-09</text>
<text x="1176.54" y="384.3" transform="rotate(-45 1176.54 384.3)" text-anchor="middle" dominant-baseline="central" font-family="Liberation Mono" font-size="7.6" fill="#4e4e4e">04-13</text>
</svg><!--/CHART-->
<div style="position:absolute;left:5px;top:403px;width:1175px;height:1px;background:#222"></div>

<div style="position:absolute;left:4px;top:414.6px;width:8px;height:8px;border-radius:3px;background:#3b82f6"></div>
<div class="t" style="left:16.5px;top:414.5px;font-size:9px;color:#707070">Crypto</div>
<div style="position:absolute;left:55px;top:414.6px;width:8px;height:8px;border-radius:3px;background:#a855f7"></div>
<div class="t" style="left:67.5px;top:414.5px;font-size:9px;letter-spacing:-0.25px;color:#707070">Equities</div>
<div style="position:absolute;left:110px;top:414.6px;width:8px;height:8px;border-radius:3px;background:#10b981"></div>
<div class="t" style="left:121.5px;top:414.5px;font-size:9px;letter-spacing:-0.6px;color:#707070">FX</div>
<div style="position:absolute;left:143px;top:414.6px;width:8px;height:8px;border-radius:3px;background:#eab308"></div>
<div class="t" style="left:155.5px;top:414.5px;font-size:9px;color:#707070">Commodities</div>
</body></html>
